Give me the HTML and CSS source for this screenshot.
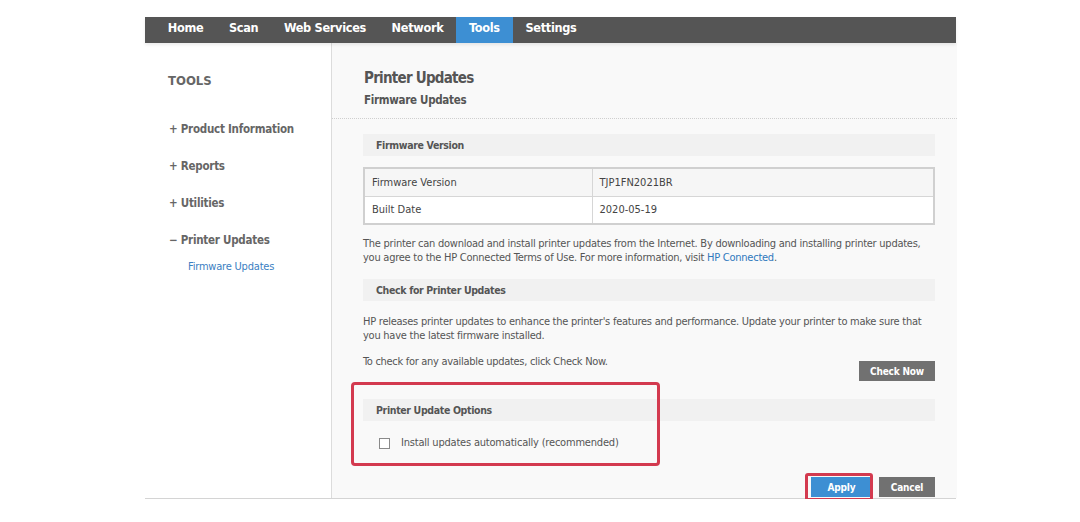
FILE: index.html
```html
<!DOCTYPE html>
<html lang="en">
<head>
<meta charset="utf-8">
<title>Printer Updates</title>
<link rel="stylesheet" href="styles.css">
</head>
<body>
<div class="frame">
  <nav class="nav">
    <a class="nav-item">Home</a>
    <a class="nav-item">Scan</a>
    <a class="nav-item">Web Services</a>
    <a class="nav-item">Network</a>
    <a class="nav-item active">Tools</a>
    <a class="nav-item">Settings</a>
  </nav>
  <div class="body">
    <aside class="sidebar">
      <div class="side-title">TOOLS</div>
      <ul class="side-list">
        <li class="side-item">+ Product Information</li>
        <li class="side-item">+ Reports</li>
        <li class="side-item">+ Utilities</li>
        <li class="side-item">&minus; Printer Updates</li>
      </ul>
      <div class="side-sub">Firmware Updates</div>
    </aside>
    <main class="main">
      <header class="page-head">
        <h1 class="title">Printer Updates</h1>
        <h2 class="subtitle">Firmware Updates</h2>
      </header>
      <div class="content">
        <div class="sec-head">Firmware Version</div>
        <table class="fw-table">
          <tr class="row-alt"><td class="c1">Firmware Version</td><td>TJP1FN2021BR</td></tr>
          <tr><td class="c1">Built Date</td><td>2020-05-19</td></tr>
        </table>
        <p class="para">The printer can download and install printer updates from the Internet. By downloading and installing printer updates, you agree to the HP Connected Terms of Use. For more information, visit <a class="link">HP Connected</a>.</p>
        <div class="sec-head sec-gap">Check for Printer Updates</div>
        <p class="para para2">HP releases printer updates to enhance the printer's features and performance. Update your printer to make sure that you have the latest firmware installed.</p>
        <div class="check-row">
          <span class="para-line">To check for any available updates, click Check Now.</span>
          <button class="btn btn-gray btn-check">Check Now</button>
        </div>
        <div class="sec-head sec-opt">Printer Update Options</div>
        <label class="cb-row"><span class="cb"></span><span>Install updates automatically (recommended)</span></label>
        <div class="actions">
          <button class="btn btn-blue">Apply</button>
          <button class="btn btn-gray">Cancel</button>
        </div>
      </div>
    </main>
  </div>
  <div class="mark mark-options"></div>
  <div class="mark mark-apply"></div>
</div>
</body>
</html>
```

FILE: styles.css
```css
* { box-sizing: border-box; }
html, body { margin: 0; padding: 0; background: #fff; }
body {
  font-family: "DejaVu Sans Condensed", "Liberation Sans", Arial, sans-serif;
  color: #555;
}
.frame {
  position: relative;
  width: 811px;
  margin: 17px 0 0 145px;
  border-bottom: 1px solid #d4d4d4;
}
.nav {
  display: flex;
  height: 26px;
  background: #555;
  padding-left: 10px;
  box-shadow: 0 2px 3px rgba(0,0,0,0.08);
  position: relative;
  z-index: 1;
}
.nav-item {
  display: block;
  padding: 0 12.8px 4px;
  line-height: 22px;
  font-size: 12.6px;
  font-weight: bold;
  color: #fff;
  letter-spacing: -0.3px;
}
.nav-item.active { background: #3d8fd3; }
.body { display: flex; height: 455px; }
.sidebar {
  width: 187px;
  flex: none;
  background: #fff;
  border-right: 1px solid #dcdcdc;
  padding: 29px 0 0 23px;
}
.side-title {
  font-size: 13px;
  font-weight: bold;
  color: #666;
  line-height: 18px;
}
.side-list { list-style: none; margin: 30px 0 0; padding: 0 0 0 1px; }
.side-item {
  font-size: 11.5px;
  font-weight: bold;
  color: #666;
  line-height: 18px;
  letter-spacing: -0.25px;
  margin-bottom: 19px;
}
.side-list .side-item:last-child { margin-bottom: 0; }
.side-sub {
  font-size: 11px;
  color: #3b80c2;
  line-height: 16px;
  letter-spacing: -0.2px;
  margin: 10px 0 0 20px;
}
.main { flex: 1; background: #f9f9f9; }
.page-head {
  padding: 25px 32px 9px;
  border-bottom: 1px dotted #cfcfcf;
}
.title { margin: 0; font-size: 15px; line-height: 20px; font-weight: bold; color: #555; letter-spacing: -0.75px; }
.subtitle { margin: 3px 0 0; font-size: 11.5px; line-height: 18px; font-weight: bold; color: #555; letter-spacing: -0.3px; }
.content { padding: 15px 22px 0 31px; }
.sec-head {
  height: 22px;
  line-height: 22px;
  background: #f1f1f1;
  padding-left: 13px;
  font-size: 10.5px;
  font-weight: bold;
  color: #555;
  letter-spacing: -0.35px;
}
.fw-table {
  width: 572px;
  margin-top: 11px;
  border-collapse: collapse;
  border: 2px solid #d0d0d0;
  background: #fff;
  font-size: 11px;
  color: #444;
}
.fw-table td {
  height: 28px;
  padding: 0 7px;
  border: 1px solid #d6d6d6;
}
.fw-table td.c1 { width: 228px; }
.row-alt td { background: #f6f6f6; }
.para {
  margin: 12px 0 0;
  font-size: 11px;
  line-height: 14px;
  letter-spacing: -0.25px;
  color: #555;
}
.para2 { margin-top: 14px; }
.link { color: #2f78bd; }
.sec-gap { margin-top: 14px; }
.check-row {
  display: flex;
  justify-content: space-between;
  align-items: flex-start;
  margin-top: 12px;
}
.para-line { font-size: 11px; line-height: 14px; letter-spacing: -0.3px; }
.btn {
  border: none;
  height: 20px;
  padding: 0;
  font-family: inherit;
  font-size: 10px;
  font-weight: bold;
  letter-spacing: -0.2px;
  color: #fff;
}
.btn-gray { background: #717171; width: 56px; }
.btn-check { width: 76px; margin-top: 6px; }
.btn-blue { background: #3d8fd3; width: 61px; }
.sec-opt { margin-top: 18px; }
.cb-row {
  display: flex;
  align-items: center;
  gap: 11px;
  margin: 15px 0 0 16px;
  font-size: 11px;
  line-height: 14px;
  letter-spacing: -0.2px;
  color: #555;
}
.cb {
  width: 11px;
  height: 11px;
  border: 1px solid #8a8a8a;
  background: #fff;
  flex: none;
}
.actions {
  display: flex;
  justify-content: flex-end;
  gap: 7px;
  margin-top: 27px;
}
.mark {
  position: absolute;
  border: 3px solid #d33a4f;
  border-radius: 4px;
}
.mark-options { left: 206px; top: 365px; width: 309px; height: 84px; }
.mark-apply { left: 660px; top: 456px; width: 68px; height: 28px; border-radius: 3px; }
```
